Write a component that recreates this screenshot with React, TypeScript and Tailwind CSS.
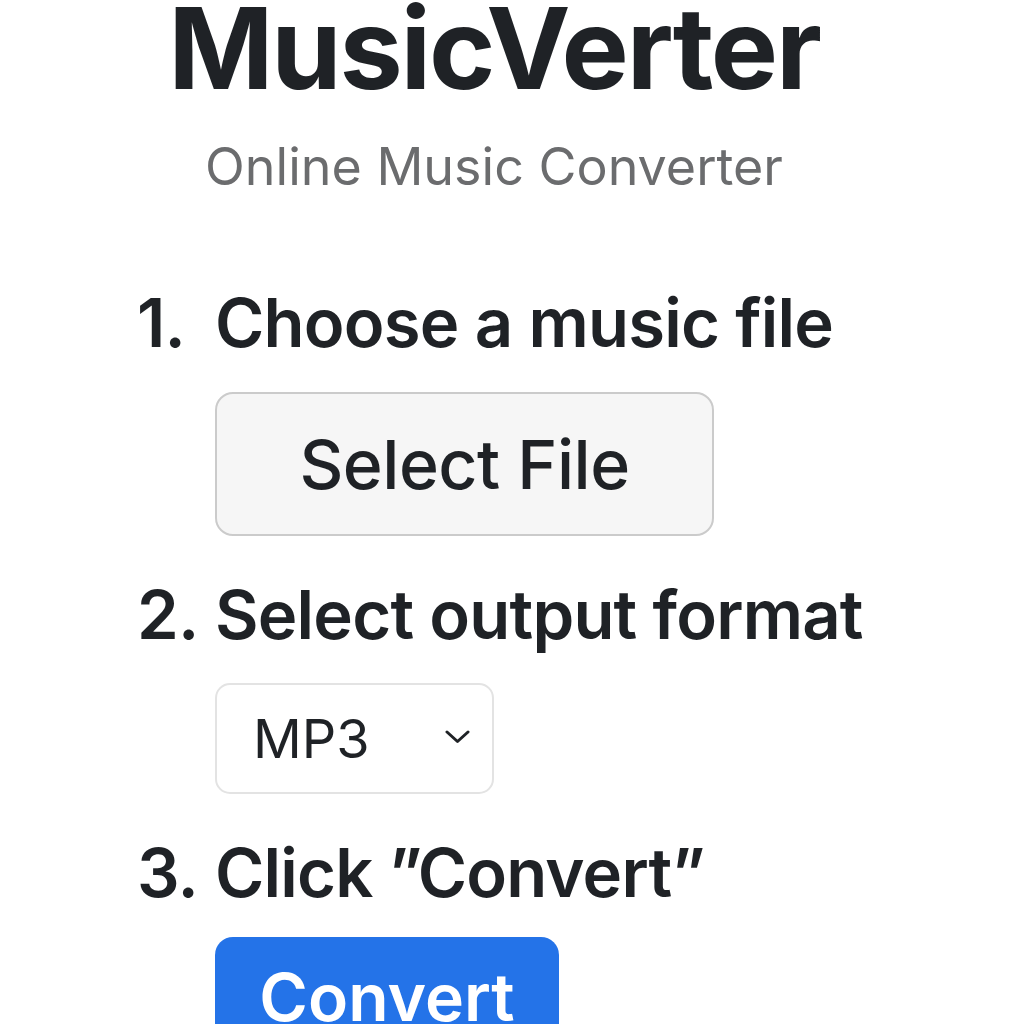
export default function App() {
  const font = { fontFamily: "Inter, 'Noto Sans', sans-serif" };

  return (
    <div className="min-h-screen bg-white text-[#1f2226] overflow-hidden" style={font}>
      <div className="ml-[137px] w-[714px]">
        <header className="text-center">
          <h1 className="text-[113px] font-bold leading-none tracking-[-2.2px] mt-[-8px]">MusicVerter</h1>
          <p className="text-[52px] leading-none text-[#6b6c6e] mt-[36px]">Online Music Converter</p>
        </header>

        <ol className="mt-[96px] flex flex-col whitespace-nowrap">
          <li className="grid grid-cols-[78px_1fr]">
            <span className="text-[67px] font-semibold leading-none tracking-[-0.8px]">1.</span>
            <div>
              <h2 className="text-[67px] font-semibold leading-none tracking-[-0.8px]">Choose a music file</h2>
              <button className="mt-[36px] w-[499px] h-[144px] rounded-[18px] border-2 border-[#cbcbcb] bg-[#f6f6f6] text-[68px] font-medium leading-none tracking-[-0.5px]">
                Select File
              </button>
            </div>
          </li>

          <li className="grid grid-cols-[78px_1fr] mt-[45px]">
            <span className="text-[67px] font-semibold leading-none tracking-[-0.8px]">2.</span>
            <div>
              <h2 className="text-[67px] font-semibold leading-none tracking-[-0.8px]">Select output format</h2>
              <div className="mt-[35px] w-[279px] h-[111px] rounded-[15px] border-2 border-[#e3e3e3] flex items-center justify-between pl-[36px] pr-[22px]">
                <span className="text-[54px] leading-none">MP3</span>
                <svg width="25" height="14" viewBox="0 0 25 14" fill="none" className="mt-[-4px]">
                  <polyline points="2,2 12.5,11.5 23,2" stroke="#1f2226" strokeWidth="3" strokeLinecap="round" strokeLinejoin="round" />
                </svg>
              </div>
            </div>
          </li>

          <li className="grid grid-cols-[78px_1fr] mt-[45px]">
            <span className="text-[67px] font-semibold leading-none tracking-[-0.8px]">3.</span>
            <div>
              <h2 className="text-[67px] font-semibold leading-none tracking-[-0.8px]">Click ”Convert”</h2>
              <button className="mt-[31px] w-[344px] h-[120px] rounded-[18px] bg-[#2473e8] text-white text-[66px] font-semibold leading-none flex justify-center items-start pt-[27px]">
                Convert
              </button>
            </div>
          </li>
        </ol>
      </div>
    </div>
  );
}
